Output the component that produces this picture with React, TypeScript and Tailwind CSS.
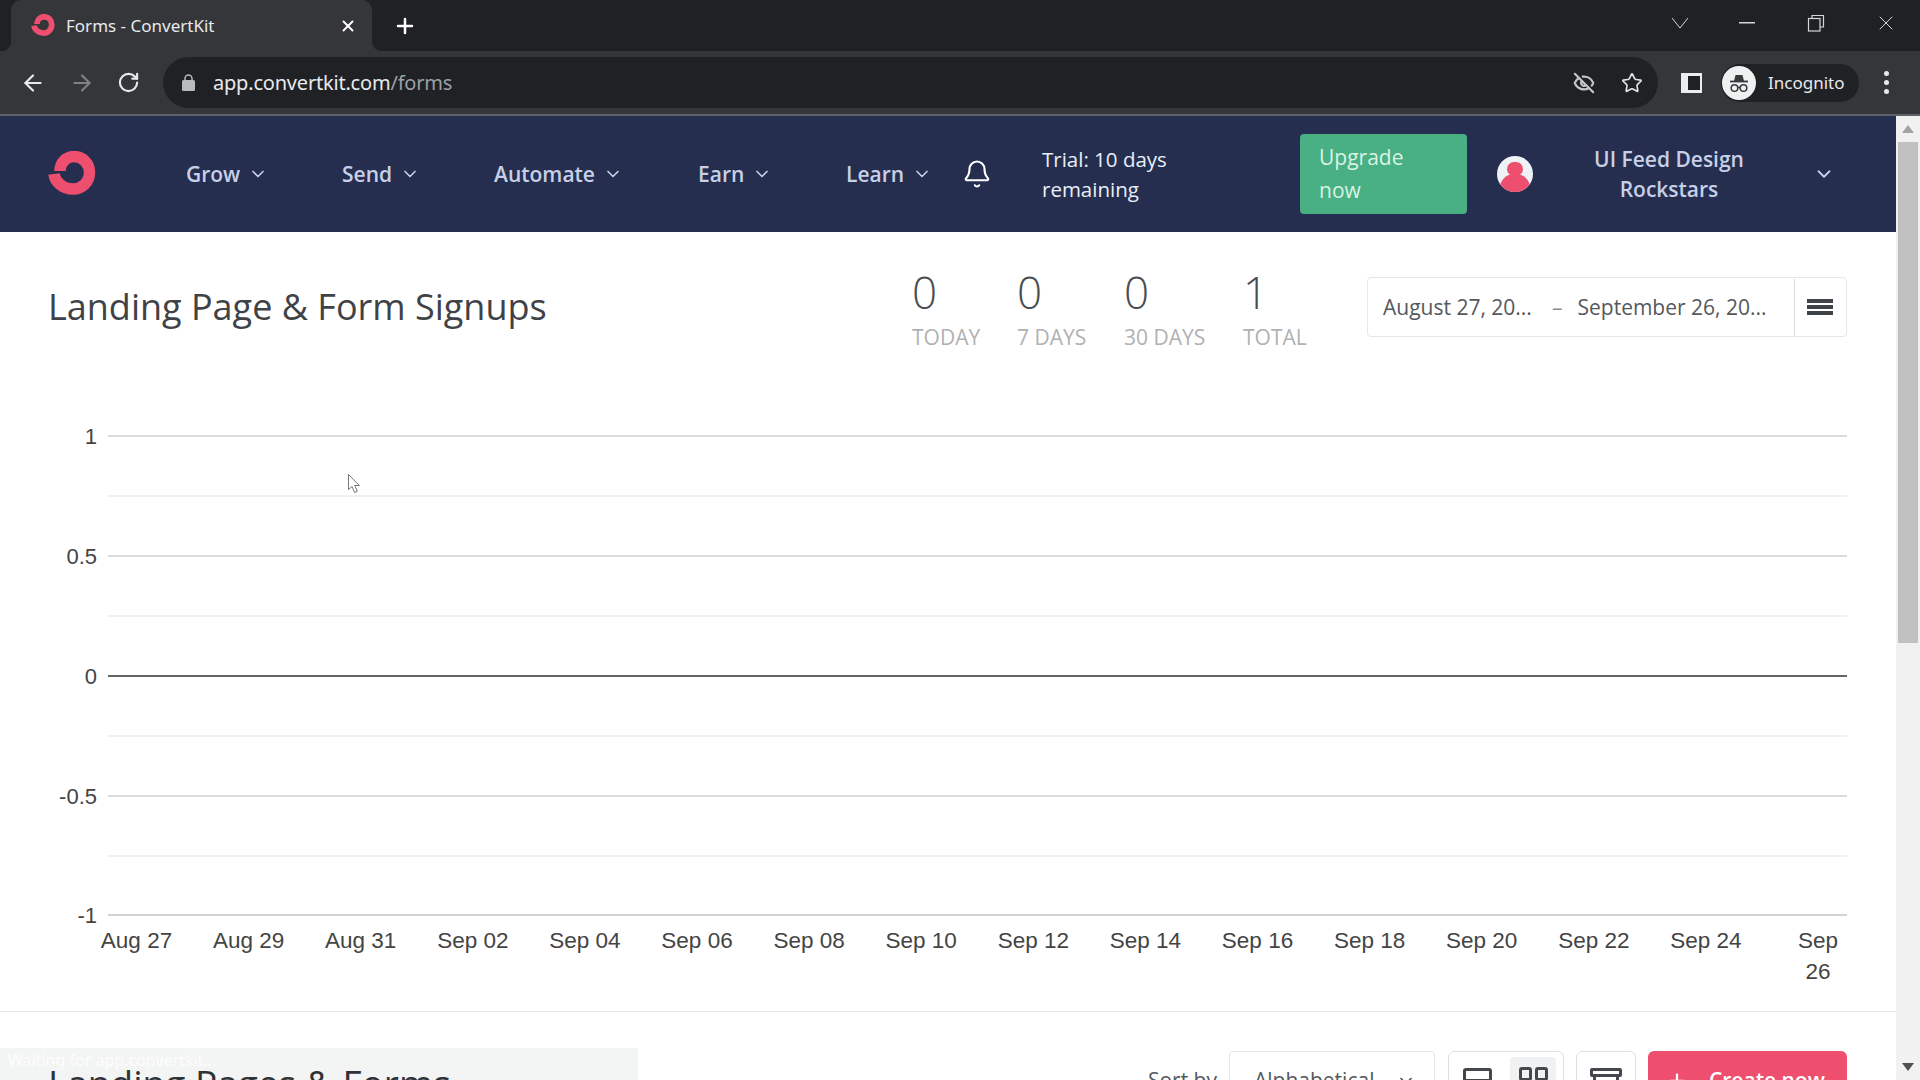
import { ArrowLeft, ArrowRight, Bell, ChevronDown, EyeOff, Plus, RotateCw, Star, X } from "lucide-react";

const navItems = ["Grow", "Send", "Automate", "Earn", "Learn"];
const navWidths = ["w-[156px]", "w-[152px]", "w-[204px]", "w-[148px]", "w-[129px]"];

const stats = [
  { value: "0", label: "TODAY", width: "w-[68px]" },
  { value: "0", label: "7 DAYS", width: "w-[70px]" },
  { value: "0", label: "30 DAYS", width: "w-[82px]" },
  { value: "1", label: "TOTAL", width: "w-[63px]" },
];

const yLabels = [
  { y: 436, text: "1" },
  { y: 556, text: "0.5" },
  { y: 676, text: "0" },
  { y: 796, text: "-0.5" },
  { y: 915, text: "-1" },
];
const minorLines = [496, 616, 736, 856];
const xLabels = ["Aug 27", "Aug 29", "Aug 31", "Sep 02", "Sep 04", "Sep 06", "Sep 08", "Sep 10", "Sep 12", "Sep 14", "Sep 16", "Sep 18", "Sep 20", "Sep 22", "Sep 24"];

function Logo({ size = 48 }: { size?: number }) {
  return (
    <svg width={size} height={size * 0.94} viewBox="0 0 48 45" fill="none">
      <path
        d="M12 20C12 12 18 5.500 26 5.500C35 5.500 41.500 12.500 41.500 21.500C41.500 31 34 38 25 38C15 38 7 31 6 23"
        stroke="#ee4f6f"
        strokeWidth="11.500"
      />
    </svg>
  );
}

function BrowserChrome() {
  return (
    <div className="shrink-0 font-['Noto_Sans',sans-serif]">
      <div className="h-[51px] bg-[#202124] flex items-end">
        <div className="ml-[11px] relative w-[361px] h-[51px] bg-[#35363a] rounded-t-[10px] flex items-center pl-[20px] pr-[15px]">
          <div className="absolute -left-[10px] bottom-0 w-[10px] h-[10px] bg-[radial-gradient(circle_at_0_0,#202124_10px,#35363a_10.5px)]" />
          <div className="absolute -right-[10px] bottom-0 w-[10px] h-[10px] bg-[radial-gradient(circle_at_100%_0,#202124_10px,#35363a_10.5px)]" />
          <Logo size={24} />
          <span className="ml-[11px] text-[17px] text-[#e8eaed]">Forms - ConvertKit</span>
          <X className="ml-auto text-white" size={18} strokeWidth={2.5} />
        </div>
        <Plus className="ml-[21px] mb-[13px] text-white" size={24} strokeWidth={2.5} />
        <div className="ml-auto h-full flex items-center pb-[6px] text-[#d5d6d8]">
          <svg width="18" height="12" viewBox="0 0 18 12" fill="none" stroke="currentColor" strokeWidth="1">
            <path d="M1 1l8 10 8-10" />
          </svg>
          <svg className="ml-[49px]" width="18" height="2" viewBox="0 0 18 2" fill="currentColor">
            <rect width="16" height="1.500" x="1" />
          </svg>
          <svg className="ml-[51px]" width="18" height="18" viewBox="0 0 18 18" fill="none" stroke="currentColor" strokeWidth="1.200">
            <path d="M5 4V1.500h11.500V13H13" />
            <rect x="1.500" y="4.500" width="11.500" height="12.500" />
          </svg>
          <X className="ml-[49px] mr-[22px]" size={24} strokeWidth={1} />
        </div>
      </div>
      <div className="h-[63px] bg-[#35363a] flex items-center">
        <ArrowLeft className="ml-[20px] text-[#e8eaed]" size={26} strokeWidth={2} />
        <ArrowRight className="ml-[23px] text-[#7e8184]" size={26} strokeWidth={2} />
        <RotateCw className="ml-[22px] text-[#e8eaed]" size={23} strokeWidth={2.2} />
        <div className="ml-[23px] w-[1495px] h-[51px] rounded-full bg-[#202124] flex items-center pl-[19px] pr-[15px]">
          <svg width="13" height="17" viewBox="0 0 13 17" fill="#b9babc">
            <rect y="6" width="13" height="11" rx="1.500" />
            <path d="M3 7V4.500a3.500 3.500 0 0 1 7 0V7" fill="none" stroke="#b9babc" strokeWidth="1.500" />
          </svg>
          <span className="ml-[18px] text-[20px] leading-none text-[#e8eaed] tracking-[-0.2px]">
            app.convertkit.com<span className="text-[#9aa0a6]">/forms</span>
          </span>
          <EyeOff className="ml-auto text-[#c4c7c5]" size={22} strokeWidth={2.4} />
          <Star className="ml-[26px] text-[#e3e3e3]" size={22} strokeWidth={1.8} />
        </div>
        <div className="ml-[23px] w-[21px] h-[20px] border-l-[7px] border-y-[3px] border-r-[2px] border-[#eceded] bg-[#202124]" />
        <div className="ml-[19px] w-[138px] h-[38px] rounded-full bg-[#202124] flex items-center">
          <div className="w-[34px] h-[34px] ml-[1px] rounded-full bg-[#eff0f0] flex items-center justify-center">
            <svg width="24" height="24" viewBox="0 0 24 24" fill="none" stroke="#3a3b3e" strokeWidth="1.500">
              <path d="M7 10l1.500-6h7l1.500 6z" fill="#3a3b3e" stroke="none" />
              <path d="M3 10.500h18" strokeWidth="1.800" />
              <circle cx="7.500" cy="17" r="3.300" />
              <circle cx="16.500" cy="17" r="3.300" />
              <path d="M10.800 16.500h2.400" />
            </svg>
          </div>
          <span className="ml-[12px] text-[17px] text-[#e8eaed]">Incognito</span>
        </div>
        <div className="ml-[25px] flex flex-col gap-[4px]">
          <div className="w-[5px] h-[5px] rounded-full bg-[#e8eaed]" />
          <div className="w-[5px] h-[5px] rounded-full bg-[#e8eaed]" />
          <div className="w-[5px] h-[5px] rounded-full bg-[#e8eaed]" />
        </div>
      </div>
      <div className="h-[2px] bg-[#5d6169]" />
    </div>
  );
}

function TopNav() {
  return (
    <div className="h-[116px] shrink-0 bg-[#252e4f] flex items-center">
      <div className="ml-[48px] w-[138px] shrink-0">
        <Logo />
      </div>
      {navItems.map((item, i) => (
        <div key={item} className={`${navWidths[i]} shrink-0 flex items-center gap-[8px] text-[21px] font-semibold text-[#c7d0e6]`}>
          <span className="mt-[2px]">{item}</span>
          <ChevronDown size={20} strokeWidth={2} />
        </div>
      ))}
      <Bell className="-ml-[13px] text-white" size={30} strokeWidth={1.7} />
      <div className="ml-[50px] w-[220px] shrink-0 text-[20.5px] leading-[30px] font-medium text-[#e9eef8]">
        Trial: 10 days
        <br />
        remaining
      </div>
      <div className="ml-[38px] w-[167px] h-[80px] shrink-0 rounded-[4px] bg-[#48b083] pl-[19px] flex items-center text-[21px] leading-[33px] font-medium text-[#d9f3e6]">
        Upgrade
        <br />
        now
      </div>
      <div className="ml-[30px] w-[36px] h-[36px] rounded-full bg-[#eef1f6] overflow-hidden flex flex-col items-center shrink-0">
        <div className="mt-[6px] w-[16px] h-[16px] rounded-full bg-[#ee4f6f]" />
        <div className="-mt-[2px] w-[30px] h-[20px] rounded-t-[14px] bg-[#ee4f6f]" />
      </div>
      <div className="ml-[13px] w-[246px] shrink-0 text-center text-[21px] leading-[30px] font-semibold text-[#c7d0e6]">
        UI Feed Design
        <br />
        Rockstars
      </div>
      <ChevronDown className="ml-[21px] text-[#c7d0e6]" size={22} strokeWidth={2} />
    </div>
  );
}

function SignupsHeader() {
  return (
    <div className="mt-[33px] h-[86px] shrink-0 pl-[48px] pr-[49px] flex items-center">
      <h1 className="-mt-[2px] text-[36px] leading-[48px] text-[#3f4246]">Landing Page &amp; Form Signups</h1>
      <div className="ml-auto mr-[61px] flex gap-[37px]">
        {stats.map((s) => (
          <div key={s.label} className={`${s.width} flex flex-col`}>
            <div className="mb-[4px] text-[44px] leading-[54px] font-light text-[#4a4c50]">{s.value}</div>
            <div className="text-[21px] leading-[28px] text-[#b0b1b3] whitespace-nowrap">{s.label}</div>
          </div>
        ))}
      </div>
      <div className="-mt-[2px] w-[480px] h-[60px] border border-[#e6e7e8] rounded-[4px] flex items-center pt-[1px] text-[21px] text-[#55585c]">
        <span className="ml-[15px] w-[158px] whitespace-nowrap">August 27, 20...</span>
        <span className="ml-[11px] text-[#8a8c90]">–</span>
        <span className="ml-[15px] w-[190px] whitespace-nowrap">September 26, 20...</span>
        <div className="ml-auto -mt-[1px] h-full w-[52px] border-l border-[#d9dadb] flex flex-col items-center justify-center gap-[2px] pr-[1px]">
          <div className="w-[26px] h-[4px] bg-[#3f4246]" />
          <div className="w-[26px] h-[4px] bg-[#3f4246]" />
          <div className="w-[26px] h-[4px] bg-[#3f4246]" />
        </div>
      </div>
    </div>
  );
}

function Chart() {
  const font = "'Liberation Sans', Arial, sans-serif";
  return (
    <svg className="block shrink-0" width="1896" height="660" viewBox="0 351 1896 660" fill="none">
      {minorLines.map((y) => (
        <line key={y} x1="108" x2="1847" y1={y} y2={y} stroke="#ececec" strokeWidth="1.500" />
      ))}
      {yLabels.map((l) => (
        <line
          key={l.y}
          x1="108"
          x2="1847"
          y1={l.y}
          y2={l.y}
          stroke={l.text === "0" ? "#333333" : l.text === "-1" ? "#c4c4c4" : "#cfcfcf"}
          strokeWidth="1.500"
        />
      ))}
      {yLabels.map((l) => (
        <text key={l.text} x="97" y={l.y + 8} textAnchor="end" fontFamily={font} fontSize="22" fill="#444444">
          {l.text}
        </text>
      ))}
      {xLabels.map((label, i) => (
        <text key={label} x={136.5 + i * 112.1} y="948" textAnchor="middle" fontFamily={font} fontSize="22.5" fill="#444444">
          {label}
        </text>
      ))}
      <text x="1818" y="948" textAnchor="middle" fontFamily={font} fontSize="22.5" fill="#444444">
        Sep
      </text>
      <text x="1818" y="979" textAnchor="middle" fontFamily={font} fontSize="22.5" fill="#444444">
        26
      </text>
      {/* mouse pointer from the recording */}
      <path d="M348.500 474.500v15l3.500-3 2.500 6 2.800-1.200-2.500-5.800h4.500z" fill="#fff" stroke="#555" strokeWidth="0.800" />
    </svg>
  );
}

function FormsHeader() {
  return (
    <div className="shrink-0 border-t-[1.5px] border-[#e7e8e9] pt-[39px] pl-[48px] pr-[49px] flex items-start">
      <h2 className="relative z-10 mt-[7px] text-[37px] leading-[50px] text-[#2f3237] whitespace-nowrap">Landing Pages &amp; Forms</h2>
      <span className="ml-auto mt-[14px] text-[21px] text-[#55585c]">Sort by</span>
      <div className="ml-[12px] w-[206px] h-[60px] border border-[#e6e7e8] rounded-[4px] flex items-center pl-[24px] pr-[18px] text-[21px] text-[#55585c]">
        Alphabetical
        <ChevronDown className="ml-auto" size={20} />
      </div>
      <div className="ml-[13px] w-[116px] h-[60px] border border-[#dedfe0] rounded-[6px] flex items-start pt-[5px] pl-[14px]">
        <div className="w-[32px] h-[44px] pt-[11px]">
          <div className="w-[29px] h-[14px] border-[3px] border-[#44474b] rounded-[3px]" />
        </div>
        <div className="ml-[15px] w-[46px] h-[44px] rounded-[4px] bg-[#f0f1f2] flex justify-center gap-[3px] pt-[10px]">
          <div className="w-[13px] h-[14px] border-[3px] border-[#44474b] rounded-[3px]" />
          <div className="w-[13px] h-[14px] border-[3px] border-[#44474b] rounded-[3px]" />
        </div>
      </div>
      <div className="ml-[12px] w-[60px] h-[60px] border border-[#dedfe0] rounded-[6px] flex flex-col items-center pt-[16px]">
        <div className="w-[32px] h-[9px] border-[3px] border-[#44474b] rounded-[2px]" />
        <div className="w-[26px] h-[18px] border-x-[3px] border-b-[3px] border-[#44474b] flex justify-center pt-[3px]">
          <div className="w-[10px] h-[2px] bg-[#44474b]" />
        </div>
      </div>
      <div className="ml-[12px] w-[199px] h-[60px] rounded-[6px] bg-[#ee4f6f] flex items-center pl-[18px] text-[21px] font-semibold text-white">
        <Plus size={22} strokeWidth={2.5} />
        <span className="ml-[21px]">Create now</span>
      </div>
    </div>
  );
}

function Scrollbar() {
  return (
    <div className="w-[24px] h-full bg-[#f1f1f1] flex flex-col items-center shrink-0">
      <div className="mt-[9px] w-0 h-0 border-x-[6px] border-x-transparent border-b-[8px] border-b-[#a3a3a3]" />
      <div className="mt-[9px] w-[20px] h-[501px] bg-[#c1c1c1]" />
      <div className="mt-auto mb-[9px] w-0 h-0 border-x-[6px] border-x-transparent border-t-[8px] border-t-[#505050]" />
    </div>
  );
}

export default function App() {
  return (
    <div className="relative w-[1920px] h-[1080px] overflow-hidden bg-white flex flex-col font-['Open_Sans',sans-serif]">
      <BrowserChrome />
      <div className="flex-1 min-h-0 flex">
        <div className="flex-1 min-w-0 flex flex-col overflow-hidden">
          <TopNav />
          <SignupsHeader />
          <Chart />
          <FormsHeader />
        </div>
        <Scrollbar />
      </div>
      {/* faded status bubble at the bottom left */}
      <div className="absolute left-0 bottom-0 w-[638px] h-[32px] bg-[#f3f4f4] pl-[8px] text-[16px] leading-[24px] text-white/80 font-['Noto_Sans',sans-serif]">
        Waiting for app.convertkit...
      </div>
    </div>
  );
}
